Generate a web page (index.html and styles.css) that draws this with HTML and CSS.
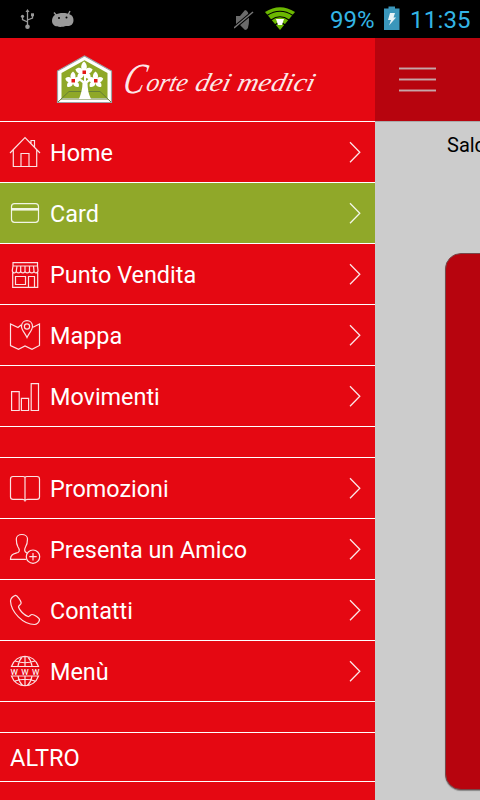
FILE: index.html
```html
<!DOCTYPE html>
<html lang="it">
<head>
<meta charset="utf-8">
<title>Corte dei medici</title>
<link rel="stylesheet" href="styles.css">
</head>
<body>
<svg class="defs" width="0" height="0"><defs>
<symbol id="chev" viewBox="0 0 26 60"><path d="M1 20.3L10.8 30.3L1 40.3" fill="none" stroke="#fff" stroke-opacity=".9" stroke-width="1.3"/></symbol>
<g id="petals"><path d="M0 0C-4-3-3.500-8 0-10.500C3.500-8 4-3 0 0Z"/><path d="M0 0C-4-3-3.500-7 0-9C3.500-7 4-3 0 0Z" transform="rotate(72)"/><path d="M0 0C-4-3-3.500-7 0-9C3.500-7 4-3 0 0Z" transform="rotate(135)"/><path d="M0 0C-4-3-3.500-7 0-9C3.500-7 4-3 0 0Z" transform="rotate(-135)"/><path d="M0 0C-4-3-3.500-7 0-9C3.500-7 4-3 0 0Z" transform="rotate(-72)"/></g>
</defs></svg>
<div class="status">
  <svg width="90" height="38" viewBox="0 0 90 38">
    <g fill="none" stroke="#999" stroke-width="1.3"><path d="M27.500 27V11M27.500 22L22.500 19.500V16M27.500 20L32.500 18V15"/></g>
    <g fill="#999"><circle cx="27.500" cy="26.700" r="2.300"/><path d="M25.500 12L27.500 9L29.500 12Z"/><circle cx="22.500" cy="16.300" r="1.600"/><path d="M31 13.300h3v3h-3z"/>
    <path d="M52 21C52 15 57 13 63 13S73.500 15 73.500 20C73.500 25 70 26.500 66 26C62 27.500 52 28 52 21Z"/></g>
    <path d="M54 12.500L57 16M70 11L68 15" stroke="#999" stroke-width="1.400"/><circle cx="59" cy="18" r="1" fill="#000"/><circle cx="66.500" cy="17.500" r="1" fill="#000"/>
  </svg>
  <svg class="signal" width="66" height="38" viewBox="0 0 66 38">
    <path d="M2 16H6L11 10Q15 10 15 20T11 30L6 25H2Z" fill="#6b6b6b" /><path d="M0 28L19 12" stroke="#000" stroke-width="3.500"/><path d="M0 28L19 12" stroke="#777" stroke-width="1.500"/>
    <path d="M31 12Q46 2.500 61 12L46 30Z" fill="#6bb700"/><path d="M33 15.500Q46 7 59 15.500M37 20Q46 13.500 55 20M41 25Q46 20.500 51 25" fill="none" stroke="#000" stroke-width="1.200"/><path d="M42 19H50L48 25H44Z" fill="#fff"/>
  </svg>
  <span class="percent">99%</span>
  <svg class="battery" width="16" height="38" viewBox="0 0 16 38"><path d="M0 8.500H4.500V6.500H11V8.500H15.500V30H0Z" fill="#3a96bb"/><path d="M6 13H11L9.500 17.500H12L5 25.500L7 20H4Z" fill="#e9f3f7"/></svg>
  <span class="clock">11:35</span>
</div>
<div class="app">
  <nav class="menu">
    <div class="brand">
      <svg width="375" height="83" viewBox="0 0 375 83">
        <path d="M57.500 64.500V33L84.500 18L111.500 33V64.500Z" fill="#fff" stroke="#9da1a5" stroke-width="1.200"/>
        <path d="M61.500 60V35L84.500 22.300L107.500 35V60Z" fill="#8fa828"/>
        <path d="M58 64L69 53.500H100L111 64M61 61H108" fill="none" stroke="#667f36" stroke-width="1"/>
        <path d="M79 61Q82.500 52 82.500 45Q80 42 75 41V39.500Q81 40 84 43V34H86V43Q89 40 95 39.500V41Q90 42 87.500 45Q87.500 54 91 61Z" fill="#fff"/>
        <g fill="#fff"><use href="#petals" x="84" y="34"/><use href="#petals" transform="translate(73 43) scale(.9)"/><use href="#petals" transform="translate(95.500 43) scale(.9)"/></g>
        <path d="M82.500 32.500h3.500v3.500h-3.500zM71.500 41h3.500v3.500h-3.500zM94 41h3.500v3.500h-3.500z" fill="#e41815"/>
        <g class="script" transform="translate(0 53) skewX(-14)"><text class="initial" x="122" y="2" textLength="21" lengthAdjust="spacingAndGlyphs">C</text><text x="145" y="0" textLength="41" lengthAdjust="spacingAndGlyphs">orte</text><text x="194" y="0" textLength="35" lengthAdjust="spacingAndGlyphs">dei</text><text x="236" y="0" textLength="77" lengthAdjust="spacingAndGlyphs">medici</text></g>
      </svg>
    </div>
    <a class="row"><svg class="icon" viewBox="0 0 50 60"><path d="M10 31L25 15.500L40 31M13.300 28V44.500H36.700V28M21 44.500V31.500H29V44.500M31 21.500V18.500H34.500V25"/></svg><span>Home</span><svg class="chev"><use href="#chev"/></svg></a>
    <a class="row active"><svg class="icon" viewBox="0 0 50 60"><rect x="11.500" y="20.600" width="27" height="18.700" rx="3"/><path d="M11.500 26.300H38.500" stroke-width="2.600"/></svg><span>Card</span><svg class="chev"><use href="#chev"/></svg></a>
    <a class="row"><svg class="icon" viewBox="0 0 50 60"><path d="M13 22V18.700H37.500V22M13 22H37.500L38 26.500C38 29.500 34 29.500 34 27C34 29.500 29.500 29.500 29.500 27C29.500 29.500 25 29.500 25 27C25 29.500 20.700 29.500 20.700 27C20.700 29.500 16.300 29.500 16.300 27C16.300 29.500 12.300 29.500 12.300 26.500ZM16.300 27L17 22M20.700 27V22M25 27V22M29.500 27V22M34 27L33.500 22M12.700 28.500V43.300H37.700V28.500M15.500 32.500H25.500V40.500H15.500ZM28.500 43V32.500H34.500V43"/></svg><span>Punto Vendita</span><svg class="chev"><use href="#chev"/></svg></a>
    <a class="row"><svg class="icon" viewBox="0 0 50 60"><path d="M21 20L18 22.500L10.500 19V40.500L18.500 44.300L25 41L32 44.300L39.500 40.500V19L33 22.300M27 32.500C25.500 29 21.500 25 21.500 21.500C21.500 13.700 32.500 13.700 32.500 21.500C32.500 25 28.500 29 27 32.500Z"/><circle cx="27" cy="21.500" r="2.600"/></svg><span>Mappa</span><svg class="chev"><use href="#chev"/></svg></a>
    <a class="row"><svg class="icon" viewBox="0 0 50 60"><path d="M11.600 25.700H19.200V44.500H11.600ZM21.400 32.400H28.600V44.500H21.400ZM31.200 17.700H38.500V44.500H31.200Z"/></svg><span>Movimenti</span><svg class="chev"><use href="#chev"/></svg></a>
    <div class="gap"></div>
    <a class="row"><svg class="icon" viewBox="0 0 50 60"><path d="M25 43.500V19.500Q24.500 18.500 23 18.500H13Q10.500 18.500 10.500 21V39Q10.500 41.300 13 41.300H22.500Q24.500 41.300 25 42.500Q25.500 41.300 27.500 41.300H37Q39.500 41.300 39.500 39V21Q39.500 18.500 37 18.500H27Q25.500 18.500 25 19.500"/></svg><span>Promozioni</span><svg class="chev"><use href="#chev"/></svg></a>
    <a class="row"><svg class="icon" viewBox="0 0 50 60"><path d="M26 40.300H10.500C10.500 35 14 35 18 33.500C20 32.500 19.500 30 18 28C16.500 25.500 16.300 23 16.300 20C16.300 14 27.500 14 27.500 20C27.500 23 27.300 25.500 25.500 28C24 31 24.500 33 27 34"/><circle cx="33" cy="37.700" r="6.700"/><path d="M29.300 37.700H36.700M33 34V41.400"/></svg><span>Presenta un Amico</span><svg class="chev"><use href="#chev"/></svg></a>
    <a class="row"><svg class="icon" viewBox="0 0 50 60"><path d="M15.500 15.300C13 16 10.500 18.500 10.500 21C11 32 23 44.500 34.500 44.500C37 44.500 39 42 39.500 40C40 38 34 34.500 32 34.500C30.500 34.500 29.500 37 28 36.500C24 35 19.500 30.500 18.500 27C18 25.500 21 25 21.200 23C21.200 21 17 15 15.500 15.300Z"/></svg><span>Contatti</span><svg class="chev"><use href="#chev"/></svg></a>
    <a class="row"><svg class="icon" viewBox="0 0 50 60"><path d="M11.500 25.500C16 12 34 12 38.500 25.500ZM11.500 35H38.500C34 48 16 48 11.500 35ZM25 15.500V25M25 35V44.500M18 25Q19 19 22.500 15.500M32 25Q31 19 27.500 15.500M18 35Q19 41 22.500 44.500M32 35Q31 41 27.500 44.500M15 20Q25 23.500 35 20M15 40Q25 36.500 35 40"/><text class="www" x="10.500" y="33.500" textLength="29">www</text></svg><span>Menù</span><svg class="chev"><use href="#chev"/></svg></a>
    <div class="gap"></div>
    <div class="section"><span>ALTRO</span></div>
  </nav>
  <main class="page">
    <header class="bar"><div class="burger"><i></i><i></i><i></i></div></header>
    <div class="label">Saldo</div>
    <div class="card"></div>
  </main>
</div>
</body>
</html>
```
FILE: styles.css
```css
* { box-sizing: border-box; }
body { margin: 0; width: 480px; height: 800px; overflow: hidden; background: #000; font-family: Roboto, sans-serif; display: flex; flex-direction: column; }
svg { display: block; flex: none; }
.defs { position: absolute; }
.status { height: 38px; flex: none; display: flex; color: #33b5e5; font-size: 24px; line-height: 40px; white-space: nowrap; }
.signal { margin-left: 144px; }
.percent { margin-left: 30px; width: 54px; }
.clock { margin-left: 10px; letter-spacing: .2px; }
.app { flex: 1; display: flex; overflow: hidden; }
.menu { width: 375px; flex: none; background: #e50812; color: #fff; }
.brand { height: 84px; border-bottom: 1px solid #fff; }
.script { font: italic 300 26px "Liberation Serif", serif; fill: #fff; fill-opacity: .92; }
.initial { font-size: 43px; }
.row { height: 61px; border-bottom: 1px solid #fff; display: flex; align-items: center; font-size: 23.4px; }
.row span { flex: 1; padding-top: 2px; }
.active { background: #90a829; }
.icon { width: 50px; height: 60px; fill: none; stroke: #fff; stroke-opacity: .88; stroke-width: 1.2; }
.www { font: 400 10px Roboto, sans-serif; fill: #fff; stroke: none; }
.chev { width: 26px; height: 60px; }
.gap { height: 31px; border-bottom: 1px solid #fff; }
.section { height: 49px; border-bottom: 1px solid #fff; padding: 1px 0 0 10px; font-size: 23.6px; line-height: 48px; }
.page { flex: 1; min-width: 0; background: #ccc; overflow: hidden; }
.bar { height: 84px; background: #b7040e; border-bottom: 1px solid #aaa; padding: 29px 0 0 24px; }
.burger { width: 37px; display: grid; gap: 8px; }
.burger i { height: 3px; background: #c6a6a8; border: solid #bd4f56; border-width: 1px 0; }
.label { margin: 11px 0 0 72px; height: 24px; font-size: 20px; line-height: 24px; color: #000; }
.card { margin: 96px 0 0 70px; width: 340px; height: 537px; border-radius: 16px; background: #b7040e; border: 1px solid #77484a; box-shadow: 0 1px 1px #888; }
```
